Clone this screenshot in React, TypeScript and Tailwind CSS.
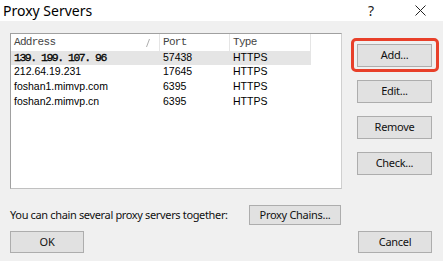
import React from "react";

const rows = [
  { a: "212.64.19.231", p: "17645", t: "HTTPS" },
  { a: "foshan1.mimvp.com", p: "6395", t: "HTTPS" },
  { a: "foshan2.mimvp.cn", p: "6395", t: "HTTPS" },
];

function Btn({ children, className = "" }: { children: React.ReactNode; className?: string }) {
  return (
    <div
      className={`flex items-center justify-center whitespace-nowrap bg-[#e1e1e1] border border-[#adadad] text-[11px] tracking-[-0.3px] text-[#111] ${className}`}
      style={{ fontFamily: '"Noto Sans", "Open Sans", sans-serif' }}
    >
      {children}
    </div>
  );
}

export default function App() {
  const ui = { fontFamily: '"Noto Sans", "Open Sans", sans-serif' };
  const mono = { fontFamily: '"Liberation Mono", "DejaVu Sans Mono", monospace' };
  const tab = { fontFamily: '"Liberation Sans", Arial, sans-serif' };
  return (
    <div className="w-[443px] h-[261px] bg-[#f0f0f0] flex flex-col overflow-hidden" style={ui}>
      <div className="h-[21px] bg-white flex items-center shrink-0">
        <div className="pl-[3px] text-[14px] text-black leading-none">Proxy Servers</div>
        <div className="ml-auto w-[14px] text-[14px] leading-none text-[#222] mr-[33px]">?</div>
        <svg width="11" height="11" viewBox="0 0 11 11" className="mr-[17px]">
          <path d="M0.5 0.5 L10.5 10.5 M10.5 0.5 L0.5 10.5" stroke="#222" strokeWidth="1" />
        </svg>
      </div>
      <div className="flex pl-[10px] pt-[12px]">
        <div className="w-[332px] h-[156px] bg-white border border-[#a0a0a0] border-r-[#d0d0d0] border-b-[#c0c0c0] flex flex-col">
          <div className="flex h-[17px] text-[11px] text-[#444] tracking-[-0.7px]" style={mono}>
            <div className="w-[149px] flex items-center pl-[3px] border-r border-[#e5e5e5] relative">
              Address
              <svg width="4" height="8" viewBox="0 0 4 8" className="absolute right-[9px] top-[5px]">
                <path d="M3.5 0 L0.5 8" stroke="#999" strokeWidth="0.8" />
              </svg>
            </div>
            <div className="w-[70px] flex items-center pl-[3px] border-r border-[#e5e5e5]">Port</div>
            <div className="w-[81px] flex items-center pl-[3px] border-r border-[#e5e5e5]">Type</div>
          </div>
          <div className="flex h-[14px] w-[300px] bg-[#e5e5e5] text-black items-center">
            <div className="w-[149px] pl-[3px] text-[11.5px] tracking-[-1.5px] [-webkit-text-stroke:0.3px_#000]" style={mono}>139. 199. 107. 96</div>
            <div className="w-[70px] pl-[3px] text-[10.5px]" style={tab}>57438</div>
            <div className="w-[81px] pl-[3px] text-[10.5px]" style={tab}>HTTPS</div>
          </div>
          {rows.map((r) => (
            <div key={r.a} className="flex h-[14.7px] text-[10.5px] text-black items-center" style={tab}>
              <div className="w-[149px] pl-[3px]">{r.a}</div>
              <div className="w-[70px] pl-[3px]">{r.p}</div>
              <div className="w-[81px] pl-[3px]">{r.t}</div>
            </div>
          ))}
        </div>
        <div className="flex flex-col ml-[15px] pt-[11px] gap-[13px]">
          <div className="relative">
            <div className="absolute -left-[6px] -right-[7px] -top-[6px] -bottom-[5px] border-[3px] border-[#e8402a] rounded-[5px]" />
            <Btn className="w-[75px] h-[23px] border-[#0078d7]">Add...</Btn>
          </div>
          <Btn className="w-[75px] h-[23px]">Edit...</Btn>
          <Btn className="w-[75px] h-[23px]">Remove</Btn>
          <Btn className="w-[75px] h-[23px]">Check...</Btn>
        </div>
      </div>
      <div className="flex items-center pl-[10px] mt-[16px]">
        <div className="w-[239px] whitespace-nowrap text-[11px] tracking-[-0.35px] text-[#111]">You can chain several proxy servers together:</div>
        <Btn className="w-[92px] h-[20px]">Proxy Chains...</Btn>
      </div>
      <div className="flex px-[10px] mt-[6px] justify-between pr-[11px]">
        <Btn className="w-[74px] h-[22px]">OK</Btn>
        <Btn className="w-[74px] h-[22px]">Cancel</Btn>
      </div>
    </div>
  );
}
